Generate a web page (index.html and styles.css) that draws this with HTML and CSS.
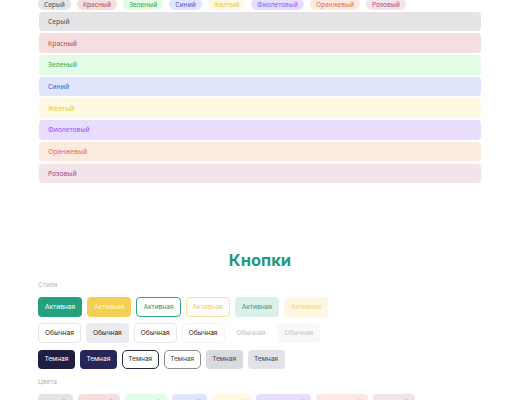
FILE: index.html
```html
<!DOCTYPE html>
<html lang="ru">
<head>
<meta charset="utf-8">
<title>Компоненты</title>
<link rel="stylesheet" href="styles.css">
</head>
<body>
<main class="page">
  <div class="tags">
    <span class="tag c-gray">Серый</span>
    <span class="tag c-red">Красный</span>
    <span class="tag c-green">Зеленый</span>
    <span class="tag c-blue">Синий</span>
    <span class="tag c-yellow">Желтый</span>
    <span class="tag c-purple">Фиолетовый</span>
    <span class="tag c-orange">Оранжевый</span>
    <span class="tag c-pink">Розовый</span>
  </div>

  <div class="alerts">
    <div class="alert c-gray">Серый</div>
    <div class="alert c-red">Красный</div>
    <div class="alert c-green">Зеленый</div>
    <div class="alert c-blue">Синий</div>
    <div class="alert c-yellow">Желтый</div>
    <div class="alert c-purple">Фиолетовый</div>
    <div class="alert c-orange">Оранжевый</div>
    <div class="alert c-pink">Розовый</div>
  </div>

  <section class="buttons">
    <h2 class="title">Кнопки</h2>
    <div class="label">Стили</div>
    <div class="row">
      <button class="btn primary">Активная</button>
      <button class="btn accent">Активная</button>
      <button class="btn primary-outline">Активная</button>
      <button class="btn accent-outline">Активная</button>
      <button class="btn primary-soft">Активная</button>
      <button class="btn accent-soft">Активная</button>
    </div>
    <div class="row">
      <button class="btn plain">Обычная</button>
      <button class="btn plain-fill">Обычная</button>
      <button class="btn plain-outline">Обычная</button>
      <button class="btn plain-ghost">Обычная</button>
      <button class="btn plain-muted">Обычная</button>
      <button class="btn plain-muted-fill">Обычная</button>
    </div>
    <div class="row">
      <button class="btn dark">Темная</button>
      <button class="btn dark-2">Темная</button>
      <button class="btn dark-outline">Темная</button>
      <button class="btn dark-outline-2">Темная</button>
      <button class="btn dark-soft">Темная</button>
      <button class="btn dark-soft-2">Темная</button>
    </div>
    <div class="label label-colors">Цвета</div>
    <div class="row">
      <button class="btn color c-gray">Серый</button>
      <button class="btn color c-red">Красный</button>
      <button class="btn color c-green">Зеленый</button>
      <button class="btn color c-blue">Синий</button>
      <button class="btn color c-yellow">Желтый</button>
      <button class="btn color c-purple">Фиолетовый</button>
      <button class="btn color c-orange">Оранжевый</button>
      <button class="btn color c-pink">Розовый</button>
    </div>
  </section>
</main>
</body>
</html>
```

FILE: styles.css
```css
* { box-sizing: border-box; }

html, body {
  margin: 0;
  background: #ffffff;
}

body {
  font-family: Inter, "Noto Sans", sans-serif;
  color: #222;
}

.page {
  width: 520px;
  padding: 0 39px 0 38px;
}

/* base button */
.btn {
  height: 19.7px;
  padding: 0 6px;
  border: 1px solid transparent;
  border-radius: 4px;
  font-family: Inter, sans-serif;
  font-size: 6.6px;
  font-weight: 400;
  line-height: 1;
  background: #fff;
  color: #222;
}

/* palette */
.c-gray   { background: #e4e4e7; color: #52525b; }
.c-red    { background: #f3dfe0; color: #b4464b; }
.c-green  { background: #e2fce6; color: #37a354; }
.c-blue   { background: #e0e5fc; color: #4655d6; }
.c-yellow { background: #fff8e3; color: #e6c54c; }
.c-purple { background: #e8ddfd; color: #8b5cf6; }
.c-orange { background: #fdeadf; color: #d9704a; }
.c-pink   { background: #f3e3ea; color: #a64d7a; }

/* pill tags */
.tags {
  display: flex;
  gap: 6px;
  margin-top: -2px;
}

.tag {
  display: inline-flex;
  align-items: center;
  height: 12px;
  padding: 0 6px;
  border-radius: 6px;
  font-family: "Noto Sans", sans-serif;
  font-size: 6.6px;
  font-weight: 400;
}

/* alert strips */
.alerts {
  display: flex;
  flex-direction: column;
  gap: 2.2px;
  margin-top: 1.7px;
  padding-left: 1px;
}

.alert {
  height: 19.5px;
  display: flex;
  align-items: center;
  padding: 0 9px;
  border-radius: 4px;
  font-family: "Noto Sans", sans-serif;
  font-size: 6.8px;
}

/* buttons section */
.buttons {
  margin-top: 67px;
}

.title {
  margin: 0;
  text-align: center;
  font-family: Inter, sans-serif;
  font-size: 16.5px;
  font-weight: 700;
  color: #1f9a7a;
  line-height: 20px;
  padding-left: 1px;
}

.label {
  font-size: 6.5px;
  color: #b4b4b4;
  margin: 11px 0 8px;
  line-height: 8px;
}

.label-colors {
  margin: 9px 0 7.3px;
}

.row {
  display: flex;
  gap: 5px;
  margin-bottom: 6.7px;
}

.primary         { background: #26a17f; color: #fff; }
.accent          { background: #f4cf55; color: #fff6dc; }
.primary-outline { border-color: #2fa584; color: #2f8f75; }
.accent-outline  { border-color: #f6e1a6; color: #f0cc5c; }
.primary-soft    { background: #dcefe9; color: #3a9a80; }
.accent-soft     { background: #fff7e3; color: #f2d27a; }

.plain            { border-color: #e4e4e8; }
.plain-fill       { background: #ebecf0; }
.plain-outline    { border-color: #e8e8ec; }
.plain-ghost      { border-color: #f4f4f6; }
.plain-muted      { color: #bdbdc2; }
.plain-muted-fill { background: #f8f8fa; color: #c4c4c8; }

.dark           { background: #1e1d42; color: #fff; padding: 0 5.5px; }
.dark-2         { background: #27265a; color: #fff; padding: 0 5.5px; }
.dark-outline   { border-color: #2a2a3e; border-radius: 5px; color: #333; padding: 0 5.5px; }
.dark-outline-2 { border-color: #8a8a94; border-radius: 5px; color: #444; padding: 0 5.5px; }
.dark-soft      { background: #d9d9e0; color: #474757; padding: 0 5.5px; }
.dark-soft-2    { background: #e2e2e8; color: #474757; padding: 0 5.5px; }

.color {
  height: 20px;
  padding: 0 6px;
  font-family: "Noto Sans", sans-serif;
}
```
